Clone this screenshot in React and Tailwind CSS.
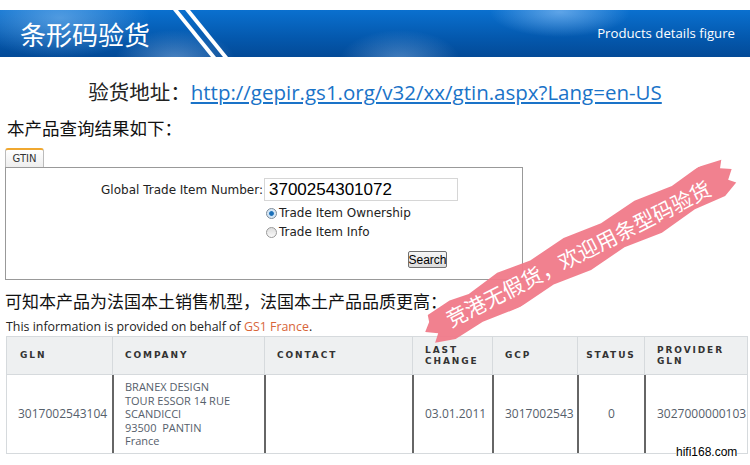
import React from 'react';

const HEAD = [
  { label: 'GLN', w: 'w-[105px]', align: 'pl-[13px]' },
  { label: 'COMPANY', w: 'w-[152px]', align: 'pl-[12px]' },
  { label: 'CONTACT', w: 'w-[148px]', align: 'pl-[12px]' },
  { label: ['LAST', 'CHANGE'], w: 'w-[80px]', align: 'pl-[12px]' },
  { label: 'GCP', w: 'w-[85px]', align: 'pl-[12px]' },
  { label: 'STATUS', w: 'w-[67px]', align: 'justify-center' },
  { label: ['PROVIDER', 'GLN'], w: 'flex-1', align: 'pl-[12px]' },
];

function Banner() {
  return (
    <div className="relative mt-[10px] h-[47px] overflow-hidden bg-[radial-gradient(ellipse_90px_40px_at_60px_8px,rgba(140,195,245,0.55),transparent),radial-gradient(ellipse_60px_30px_at_175px_50px,rgba(150,190,235,0.5),transparent),radial-gradient(ellipse_70px_25px_at_560px_2px,rgba(150,200,250,0.6),transparent),radial-gradient(ellipse_60px_30px_at_400px_50px,rgba(150,190,235,0.45),transparent),linear-gradient(to_bottom,#0a70cf,#0458ad_60%,#034a97)]">
      <svg className="absolute left-0 top-0" width="260" height="47" viewBox="0 0 260 47">
        <polygon points="173,0 178,0 216,47 211,47" fill="#fff" />
        <polygon points="185,0 190,0 228,47 223,47" fill="#fff" />
      </svg>
      <div className="relative flex h-full items-center justify-between pl-[20px] pr-[15px]">
        <span className="font-['Noto_Sans_CJK_SC',sans-serif] text-[26px] leading-none text-white">条形码验货</span>
        <span className="font-['Open_Sans','Noto_Sans',sans-serif] text-[13.2px] text-white">Products details figure</span>
      </div>
    </div>
  );
}

function Watermark() {
  return (
    <div className="absolute left-[402px] top-[231px] h-[44px] w-[352px] rotate-[-27deg]">
      <svg className="absolute inset-0" width="352" height="44" viewBox="0 0 352 44" preserveAspectRatio="none">
        <path
          d="M14,9 L40,6 L60,9 L95,3 L130,7 L170,2 L210,6 L250,1 L290,5 L322,0 L346,4 L341,11 L351,17 L343,25 L349,31 L333,38 L300,36 L260,42 L220,38 L180,43 L140,39 L100,44 L60,40 L28,43 L8,37 L15,30 L4,23 L12,16 Z"
          fill="#f07a89"
          fillOpacity="0.95"
        />
      </svg>
      <div className="relative flex h-full items-center justify-center font-['Noto_Sans_CJK_SC',sans-serif] text-[21px] leading-none text-white">
        竞港无假货，欢迎用条型码验货
      </div>
    </div>
  );
}

export default function App() {
  return (
    <div className="relative h-[465px] w-[750px] overflow-hidden bg-white">
      <Banner />

      {/* link line */}
      <div className="mt-[20px] text-center font-['Open_Sans','Noto_Sans_CJK_SC',sans-serif] text-[20.5px] leading-[28px] text-[#222]">
        <span className="font-['Noto_Sans_CJK_SC',sans-serif]">验货地址：</span>
        <a className="text-[#1a73c8] underline">http://gepir.gs1.org/v32/xx/gtin.aspx?Lang=en-US</a>
      </div>

      <div className="mt-[10px] pl-[7px] font-['Noto_Sans_CJK_SC',sans-serif] text-[17.5px] leading-[24px] text-[#111]">
        本产品查询结果如下：
      </div>

      {/* GTIN form */}
      <div className="ml-[5px] mt-[8px] w-[518px]">
        <div className="flex h-[19px] w-[39px] items-center justify-center rounded-t-[3px] border border-b-0 border-t-2 border-[#bbb] border-t-[#f0a830] bg-[linear-gradient(#fff,#eee)] font-['DejaVu_Sans',sans-serif] text-[10px] text-[#333]">
          GTIN
        </div>
        <div className="h-[113px] border border-[#999] font-['DejaVu_Sans',sans-serif] text-[11px] text-[#222]">
          <div className="mt-[10px] flex items-center">
            <div className="w-[257px] text-right text-[12px]">Global Trade Item Number:</div>
            <div className="ml-[1px] flex h-[23px] w-[194px] items-center border border-[#d6d6d6] pl-[4px] font-['Liberation_Sans',sans-serif] text-[17px] text-black">
              3700254301072
            </div>
          </div>
          <div className="ml-[260px] mt-[6px] flex flex-col gap-[7px] text-[12px]">
            <div className="flex items-center">
              <span className="h-[11px] w-[11px] rounded-full border border-[#7d8b99] bg-[radial-gradient(circle,#1a6fb8_30%,#cfe4f6_45%,#e8eef4)]" />
              <span className="ml-[2px] leading-[12px]">Trade Item Ownership</span>
            </div>
            <div className="flex items-center">
              <span className="h-[11px] w-[11px] rounded-full border border-[#999] bg-[linear-gradient(#ddd,#fafafa)]" />
              <span className="ml-[2px] leading-[12px]">Trade Item Info</span>
            </div>
          </div>
          <div className="ml-[402px] mt-[13px] flex h-[17px] w-[39px] items-center justify-center rounded-[2px] border border-[#707070] bg-[linear-gradient(#f6f6f6,#dcdcdc)] font-['Liberation_Sans',sans-serif] text-[12px] text-black">
            Search
          </div>
        </div>
      </div>

      <div className="mt-[9px] pl-[5px] font-['Noto_Sans_CJK_SC',sans-serif] text-[17px] leading-[24px] text-[#111]">
        可知本产品为法国本土销售机型，法国本土产品品质更高：
      </div>

      <div className="mt-[6px] pl-[6px] font-['Open_Sans',sans-serif] text-[12.4px] leading-[16px] text-[#222]">
        This information is provided on behalf of <span className="text-[#d8653a]">GS1 France</span>.
      </div>

      {/* result table */}
      <div className="ml-[6px] mt-[1px] w-[742px] border border-[#d6dadd]">
        <div className="flex h-[37px] bg-[#eef0f1] font-['DejaVu_Sans',sans-serif] text-[9px] font-bold tracking-[1.9px] text-[#333]">
          {HEAD.map((h, i) => (
            <div
              key={i}
              className={`flex items-center ${h.w} ${h.align} ${i > 0 ? 'border-l border-[#d6dadd]' : ''}`}
            >
              {Array.isArray(h.label) ? (
                <div className="leading-[11px]">
                  {h.label[0]}
                  <br />
                  {h.label[1]}
                </div>
              ) : (
                h.label
              )}
            </div>
          ))}
        </div>
        <div className="flex h-[79px] border-t border-[#d6dadd] font-['Open_Sans',sans-serif] text-[12px] text-[#56606b]">
          <div className="flex w-[105px] items-center pl-[11px]">3017002543104</div>
          <div className="flex w-[152px] items-center border-l-2 border-[#666] pl-[11px] text-[11px] leading-[13.4px]">
            <div>
              BRANEX DESIGN
              <br />
              TOUR ESSOR 14 RUE
              <br />
              SCANDICCI
              <br />
              93500&nbsp; PANTIN
              <br />
              France
            </div>
          </div>
          <div className="w-[148px] border-l-2 border-[#666]" />
          <div className="flex w-[80px] items-center border-l-2 border-[#666] pl-[11px]">03.01.2011</div>
          <div className="flex w-[85px] items-center border-l-2 border-[#666] pl-[11px]">3017002543</div>
          <div className="flex w-[67px] items-center justify-center border-l-2 border-[#666]">0</div>
          <div className="flex flex-1 items-center border-l-2 border-[#666] pl-[11px]">3027000000103</div>
        </div>
      </div>

      <Watermark />

      <div className="absolute left-[676px] top-[445px] bg-white font-['Liberation_Sans',sans-serif] text-[12px] leading-[15px] text-black">
        hifi168.com
      </div>
    </div>
  );
}
